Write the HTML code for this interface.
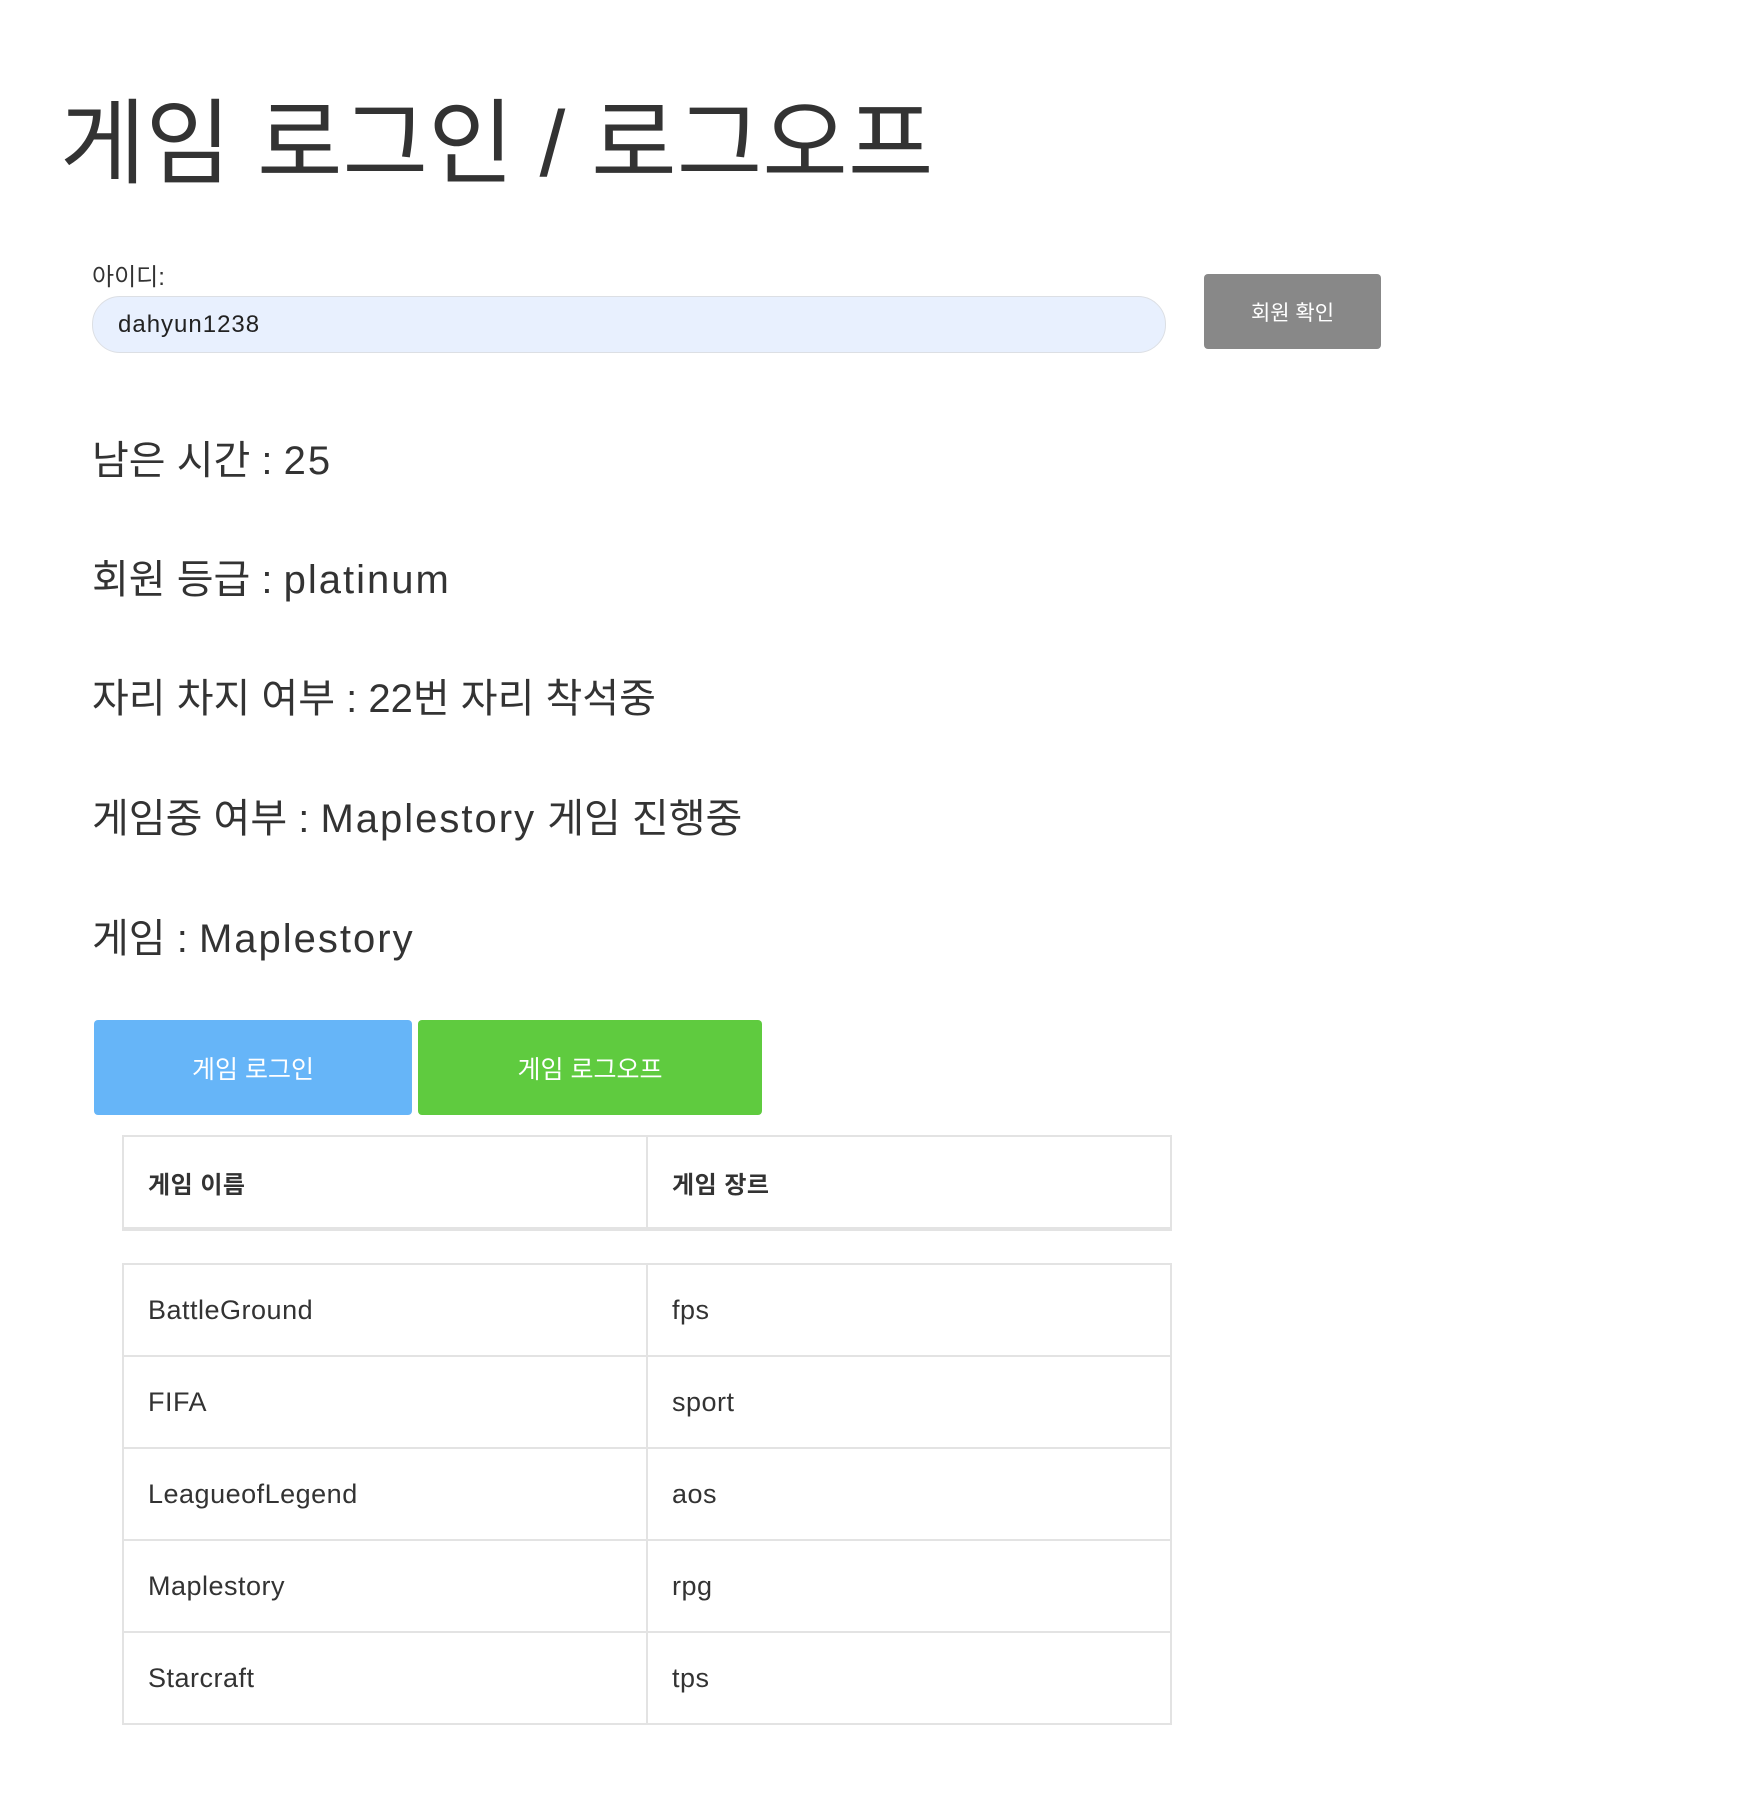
<!DOCTYPE html>
<html><head><meta charset="utf-8"><style>
body{margin:0;width:1752px;height:1802px;background:#fff;font-family:"Liberation Sans","Noto Sans CJK KR",sans-serif;color:#333;position:relative;overflow:hidden}
.a{position:absolute;white-space:nowrap}
h1{position:absolute;left:60px;top:84px;margin:0;font-size:93px;font-weight:400;line-height:120px;letter-spacing:0}
.line{position:absolute;left:92px;font-size:40px;line-height:50px}
.e{letter-spacing:2px}
.btn{position:absolute;color:#fff;font-size:25px;display:flex;align-items:center;justify-content:center;border-radius:4px}
table{position:absolute;left:122px;width:1050px;border-collapse:collapse}
td{border:2px solid #e3e3e3;padding:0 0 0 24px;font-size:27px;height:90px;width:50%;letter-spacing:0.5px}
</style></head><body>
<h1>게임 로그인 / 로그오프</h1>
<div class="a" style="left:92px;top:257px;font-size:24px">아이디:</div>
<div class="a" style="left:92px;top:296px;width:1074px;height:57px;background:#e8f0fe;border:1px solid #dcdfe4;border-radius:28px;box-sizing:border-box;padding-left:25px;font-size:24px;line-height:55px;color:#222;letter-spacing:1px">dahyun1238</div>
<div class="btn" style="left:1204px;top:274px;width:177px;height:75px;background:#888;font-size:21px">회원 확인</div>
<div class="line" style="top:436px">남은 시간 : <span class="e">25</span></div>
<div class="line" style="top:555px">회원 등급 : <span class="e">platinum</span></div>
<div class="line" style="top:674px">자리 차지 여부 : 22번 자리 착석중</div>
<div class="line" style="top:794px">게임중 여부 : <span class="e">Maplestory</span> 게임 진행중</div>
<div class="line" style="top:914px">게임 : <span class="e">Maplestory</span></div>
<div class="btn" style="left:94px;top:1020px;width:318px;height:95px;background:#66b5f8">게임 로그인</div>
<div class="btn" style="left:418px;top:1020px;width:344px;height:95px;background:#5fcb3f">게임 로그오프</div>
<table style="top:1135px"><tr><td style="font-weight:bold;font-size:24px;height:88px;border-bottom-width:4px">게임 이름</td><td style="font-weight:bold;font-size:24px;border-bottom-width:4px">게임 장르</td></tr></table>
<table style="top:1263px">
<tr><td>BattleGround</td><td>fps</td></tr>
<tr><td>FIFA</td><td>sport</td></tr>
<tr><td>LeagueofLegend</td><td>aos</td></tr>
<tr><td>Maplestory</td><td>rpg</td></tr>
<tr><td>Starcraft</td><td>tps</td></tr>
</table>
</body></html>
